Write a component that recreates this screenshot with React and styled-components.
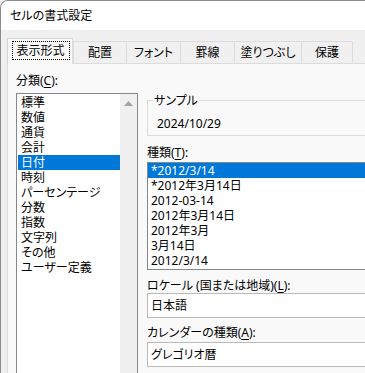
import React from "react";
import styled, { createGlobalStyle } from "styled-components";

const Global = createGlobalStyle`
  html, body { margin: 0; padding: 0; background: #f0f0f0; }
  body {
    font-family: "Noto Sans", "Noto Sans CJK JP", sans-serif;
    font-size: 12px;
    font-feature-settings: "palt";
    color: #000;
  }
`;

const Viewport = styled.div`
  width: 365px;
  height: 373px;
  overflow: hidden;
`;

const Window = styled.div`
  width: 480px;
  height: 460px;
  box-sizing: border-box;
  border-left: 1px solid #8c8c8c;
  border-top: 1px solid #8c8c8c;
  border-top-left-radius: 8px;
  background: #f0f0f0;
  overflow: hidden;
  display: flex;
  flex-direction: column;
`;

const TitleBar = styled.div`
  height: 29px;
  flex: none;
  background: #ffffff;
  display: flex;
  align-items: center;
  padding-left: 9px;
  line-height: 15px;
`;

const Body = styled.div`
  padding: 8px 0 0 6px;
  display: flex;
  flex-direction: column;
  flex: 1;
`;

const TabRow = styled.div`
  display: flex;
  align-items: flex-end;
  height: 25px;
  position: relative;
  z-index: 2;
`;

const Tab = styled.div`
  box-sizing: border-box;
  width: ${(p) => p.$w}px;
  height: ${(p) => (p.$active ? 26 : 22)}px;
  margin-bottom: ${(p) => (p.$active ? -1 : 0)}px;
  border-top: 1px solid ${(p) => (p.$active ? "#d4d4d4" : "#dcdcdc")};
  border-left: 1px solid ${(p) => (p.$active ? "#d4d4d4" : "#dcdcdc")};
  border-right: ${(p) => (p.$active || p.$last ? "1px solid #dcdcdc" : "none")};
  background: ${(p) => (p.$active ? "#f9f9f9" : "#f0f0f0")};
  display: flex;
  align-items: center;
  justify-content: center;
  line-height: 15px;
  padding-bottom: ${(p) => (p.$active ? 2 : 0)}px;
`;

const FocusRing = styled.span`
  box-sizing: border-box;
  width: 58px;
  height: 19px;
  border: 1px dotted #000;
  display: flex;
  align-items: center;
  justify-content: center;
  margin-left: 1px;
`;

const Panel = styled.div`
  flex: 1;
  background: #f9f9f9;
  border: 1px solid #dcdcdc;
  padding: 9px 0 0 8px;
  display: flex;
  gap: 9px;
`;

const LeftColumn = styled.div`
  width: 122px;
  flex: none;
  display: flex;
  flex-direction: column;
`;

const RightColumn = styled.div`
  width: 300px;
  flex: none;
  margin-top: 20px;
  display: flex;
  flex-direction: column;
`;

const Label = styled.div`
  line-height: 15px;
  height: 15px;
  margin-top: ${(p) => p.$mt || 0}px;
  margin-bottom: ${(p) => p.$mb || 0}px;
  white-space: nowrap;
`;

const Key = styled.span`
  text-decoration: underline;
  text-underline-offset: 2px;
`;

const CategoryBox = styled.div`
  height: 300px;
  box-sizing: border-box;
  border: 1px solid #828790;
  background: #fff;
  display: flex;
`;

const CategoryItems = styled.div`
  width: 103px;
  padding: 1px 0 0 1px;
  box-sizing: border-box;
`;

const Item = styled.div`
  height: 15px;
  line-height: 15px;
  padding-left: 3px;
  white-space: nowrap;
  background: ${(p) => (p.$selected ? "#0078d7" : "transparent")};
  color: ${(p) => (p.$selected ? "#fff" : "#000")};
`;

const Scrollbar = styled.div`
  width: 17px;
  background: #f0f0f0;
  display: flex;
  justify-content: center;
  padding-top: 7px;
  box-sizing: border-box;
`;

const GroupBox = styled.fieldset`
  margin: 0;
  padding: 0 0 4px 0;
  border: 1px solid #dcdcdc;
  min-width: 0;
`;

const Legend = styled.legend`
  margin-left: 5px;
  padding: 0 1px;
  line-height: 15px;
`;

const SampleText = styled.div`
  margin: 8px 0 0 9px;
  line-height: 15px;
`;

const TypeBox = styled.div`
  border: 1px solid #828790;
  background: #fff;
  padding-bottom: 1px;
`;

const Field = styled.div`
  height: 25px;
  box-sizing: border-box;
  border: 1px solid #b9b9b9;
  background: #fff;
  display: flex;
  align-items: center;
  padding-left: 3px;
  line-height: 15px;
`;

const tabs = [
  { label: "表示形式", w: 66, active: true },
  { label: "配置", w: 53 },
  { label: "フォント", w: 54 },
  { label: "罫線", w: 54 },
  { label: "塗りつぶし", w: 67 },
  { label: "保護", w: 52, last: true },
];

const categories = [
  "標準",
  "数値",
  "通貨",
  "会計",
  "日付",
  "時刻",
  "パーセンテージ",
  "分数",
  "指数",
  "文字列",
  "その他",
  "ユーザー定義",
];

const types = [
  "*2012/3/14",
  "*2012年3月14日",
  "2012-03-14",
  "2012年3月14日",
  "2012年3月",
  "3月14日",
  "2012/3/14",
];

export default function App() {
  return (
    <Viewport>
      <Global />
      <Window>
        <TitleBar>セルの書式設定</TitleBar>
        <Body>
          <TabRow>
            {tabs.map((t) => (
              <Tab key={t.label} $w={t.w} $active={t.active} $last={t.last}>
                {t.active ? <FocusRing>{t.label}</FocusRing> : t.label}
              </Tab>
            ))}
          </TabRow>
          <Panel>
            <LeftColumn>
              <Label $mb={5}>
                分類(<Key>C</Key>):
              </Label>
              <CategoryBox>
                <CategoryItems>
                  {categories.map((c) => (
                    <Item key={c} $selected={c === "日付"}>
                      {c}
                    </Item>
                  ))}
                </CategoryItems>
                <Scrollbar>
                  <svg width="9" height="5" viewBox="0 0 9 5">
                    <path d="M0 5 L4.5 0 L9 5 Z" fill="#a3a3a3" />
                  </svg>
                </Scrollbar>
              </CategoryBox>
            </LeftColumn>
            <RightColumn>
              <GroupBox>
                <Legend>サンプル</Legend>
                <SampleText>2024/10/29</SampleText>
              </GroupBox>
              <Label $mt={9} $mb={2}>
                種類(<Key>T</Key>):
              </Label>
              <TypeBox>
                {types.map((t, i) => (
                  <Item key={i} $selected={i === 0}>
                    {t}
                  </Item>
                ))}
              </TypeBox>
              <Label $mt={8} $mb={0}>
                ロケール (国または地域)(<Key>L</Key>):
              </Label>
              <Field>日本語</Field>
              <Label $mt={7} $mb={2}>
                カレンダーの種類(<Key>A</Key>):
              </Label>
              <Field>グレゴリオ暦</Field>
            </RightColumn>
          </Panel>
        </Body>
      </Window>
    </Viewport>
  );
}
